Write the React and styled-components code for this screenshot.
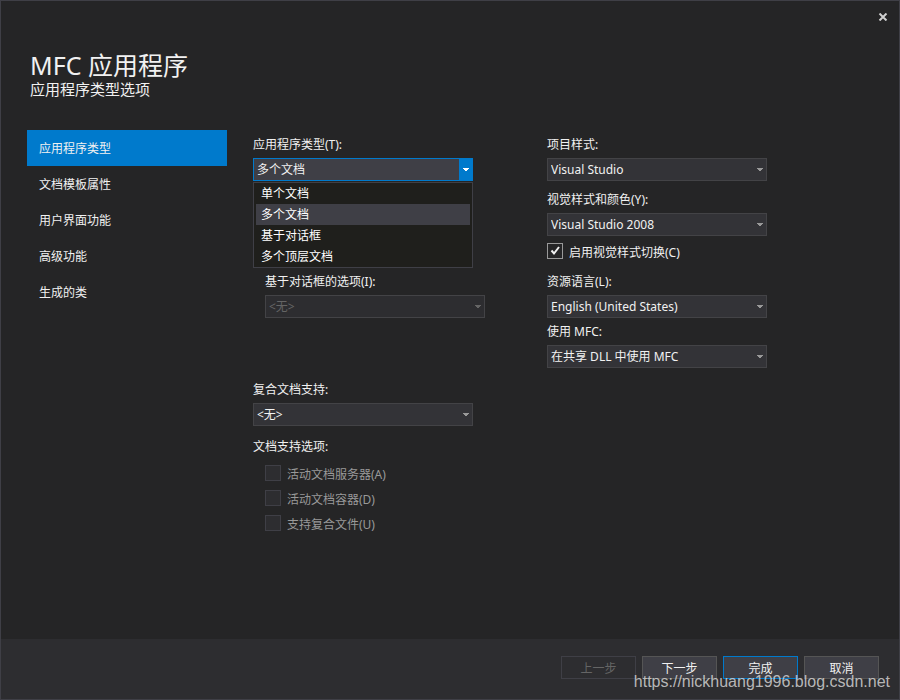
import React, { useState } from 'react'
import styled, { createGlobalStyle } from 'styled-components';

const pages = ['应用程序类型', '文档模板属性', '用户界面功能', '高级功能', '生成的类'];
const appTypes = ['单个文档', '多个文档', '基于对话框', '多个顶层文档'];

function Combo({ id, label, options, disabled, indent, active, children, ...rest }) {
    return (
        <Field $indent={indent}>
            <Label htmlFor={id}>{label}</Label>
            <ComboBox>
                <Select id={id} disabled={disabled} $active={active} {...rest}>
                    {options.map((option) => (
                        <option key={option}>{option}</option>
                    ))}
                </Select>
                <Arrow $active={active} $disabled={disabled}>
                    <svg width="6" height="3" viewBox="0 0 6 3">
                        <path d="M0 0h6v1h-1v1h-1v1h-2v-1h-1v-1h-1z" fill="currentColor" />
                    </svg>
                </Arrow>
                {children}
            </ComboBox>
        </Field>
    )
}

function Check({ id, label, ...rest }) {
    return (
        <CheckRow>
            <Box>
                <CheckInput type="checkbox" id={id} {...rest} />
                <Tick viewBox="0 0 16 16">
                    <path d="M4.5 7.5L7 10.5L12 4" fill="none" stroke="#f1f1f1" strokeWidth="2" />
                </Tick>
            </Box>
            <CheckLabel htmlFor={id}>{label}</CheckLabel>
        </CheckRow>
    )
}

function App() {
    const [page, setPage] = useState(0);
    const [type, setType] = useState('多个文档');

    return (
        <Window>
            <GlobalStyle />
            <TitleBar>
                <Close aria-label="关闭">
                    <svg width="10" height="8" viewBox="0 0 10 8">
                        <path d="M1.5 0.5L8.5 7.5M8.5 0.5L1.5 7.5" stroke="#d0d0d0" strokeWidth="2" />
                    </svg>
                </Close>
            </TitleBar>
            <Header>
                <Title>MFC 应用程序</Title>
                <Subtitle>应用程序类型选项</Subtitle>
            </Header>
            <Body>
                <Nav>
                    {pages.map((name, i) => (
                        <NavItem key={name} $active={i === page} onClick={() => setPage(i)}>{name}</NavItem>
                    ))}
                </Nav>
                <Columns>
                    <Column>
                        <Combo
                            id="type"
                            label="应用程序类型(T):"
                            options={appTypes}
                            value={type}
                            onChange={(e) => setType(e.target.value)}
                            active
                        >
                            <List role="listbox">
                                {appTypes.map((name) => (
                                    <ListItem
                                        key={name}
                                        role="option"
                                        aria-selected={name === type}
                                        $active={name === type}
                                        onClick={() => setType(name)}
                                    >
                                        {name}
                                    </ListItem>
                                ))}
                            </List>
                        </Combo>
                        <DialogGroup>
                            <Combo id="dialog" label="基于对话框的选项(I):" options={['<无>']} disabled indent />
                        </DialogGroup>
                        <CompoundGroup>
                            <Combo id="compound" label="复合文档支持:" options={['<无>']} />
                        </CompoundGroup>
                        <Options>
                            <Legend>文档支持选项:</Legend>
                            <CheckList>
                                <Check id="server" label="活动文档服务器(A)" disabled />
                                <Check id="container" label="活动文档容器(D)" disabled />
                                <Check id="files" label="支持复合文件(U)" disabled />
                            </CheckList>
                        </Options>
                    </Column>
                    <Column>
                        <StyleGroup>
                            <Combo id="project" label="项目样式:" options={['Visual Studio']} />
                            <Combo id="visual" label="视觉样式和颜色(Y):" options={['Visual Studio 2008']} />
                        </StyleGroup>
                        <SwitchGroup>
                            <Check id="switching" label="启用视觉样式切换(C)" defaultChecked />
                        </SwitchGroup>
                        <LanguageGroup>
                            <Combo id="language" label="资源语言(L):" options={['English (United States)']} />
                            <Combo id="mfc" label="使用 MFC:" options={['在共享 DLL 中使用 MFC']} />
                        </LanguageGroup>
                    </Column>
                </Columns>
            </Body>
            <Footer>
                <Button disabled>上一步</Button>
                <Button>下一步</Button>
                <Button $primary>完成</Button>
                <Button>取消</Button>
            </Footer>
            <Watermark>https://nickhuang1996.blog.csdn.net</Watermark>
        </Window>
    )
};

export default App;

const GlobalStyle = createGlobalStyle`
    * {
        box-sizing: border-box;
    }

    body {
        margin: 0;
        background: #252526;
    }

    body, button, select, input {
        font-family: "Noto Sans", "Noto Sans CJK SC", sans-serif;
        font-size: 12px;
    }
`

const Window = styled.div`
    position: relative;
    min-height: 100vh;
    display: flex;
    flex-direction: column;
    color: #f1f1f1;
    background: #252526;
    border: 1px solid #3f3f46;
`

const TitleBar = styled.div`
    display: flex;
    justify-content: flex-end;
    height: 32px;
`

const Close = styled.button`
    display: flex;
    align-items: center;
    justify-content: center;
    width: 32px;
    height: 32px;
    padding: 0;
    border: 0;
    background: none;
`

const Header = styled.header`
    padding: 17px 29px 0;
`

const Title = styled.h1`
    margin: 0;
    font-size: 25px;
    font-weight: 400;
    line-height: 30px;
`

const Subtitle = styled.p`
    margin: 0;
    font-size: 15px;
    line-height: 18px;
`

const Body = styled.main`
    flex: 1;
    display: flex;
    align-items: flex-start;
    gap: 26px;
    padding: 32px 26px 24px;
`

const Nav = styled.nav`
    display: flex;
    flex-direction: column;
    flex: 0 0 200px;
`

const NavItem = styled.button`
    height: 36px;
    padding: 0 12px;
    border: 0;
    text-align: left;
    color: #f1f1f1;
    background: ${(props) => (props.$active ? '#007acc' : 'transparent')};
`

const Columns = styled.div`
    display: flex;
    gap: 62px;
    padding-top: 6px;
`

const Column = styled.div`
    width: 232px;
`

const Field = styled.div`
    width: 220px;
    margin-left: ${(props) => (props.$indent ? '12px' : '0')};
`

const Label = styled.label`
    display: block;
    height: 18px;
    margin-bottom: 4px;
    line-height: 18px;
`

const ComboBox = styled.div`
    position: relative;
    display: grid;
    grid-template-columns: 1fr 14px;
    height: 23px;
`

const Select = styled.select`
    grid-area: 1 / 1 / 2 / 3;
    appearance: none;
    height: 23px;
    padding: 0 16px 0 3px;
    border: 1px solid ${(props) => (props.$active ? '#007acc' : '#434346')};
    border-radius: 0;
    outline: none;
    color: #f1f1f1;
    background: ${(props) => (props.$active ? '#3f3f46' : '#333337')};

    &:disabled {
        color: #656565;
        border-color: #434346;
        background: #2d2d30;
        opacity: 1;
    }
`

const Arrow = styled.span`
    grid-area: 1 / 2 / 2 / 3;
    z-index: 1;
    display: flex;
    align-items: center;
    justify-content: center;
    pointer-events: none;
    color: ${(props) => (props.$active ? '#ffffff' : props.$disabled ? '#656565' : '#999999')};
    background: ${(props) => (props.$active ? '#007acc' : 'transparent')};
`

const List = styled.ul`
    position: absolute;
    top: 24px;
    left: 0;
    right: 0;
    z-index: 2;
    margin: 0;
    padding: 0 2px;
    list-style: none;
    border: 1px solid #3f3f46;
    background: #1f1f1c;
`

const ListItem = styled.li`
    height: 21px;
    padding: 0 5px;
    line-height: 21px;
    color: #ffffff;
    background: ${(props) => (props.$active ? '#3f3f46' : 'transparent')};
`

const DialogGroup = styled.div`
    margin-top: 92px;
`

const CompoundGroup = styled.div`
    margin-top: 63px;
`

const Options = styled.fieldset`
    margin: 12px 0 0;
    padding: 0;
    border: 0;
`

const Legend = styled.legend`
    padding: 0;
    line-height: 18px;
`

const CheckList = styled.div`
    display: flex;
    flex-direction: column;
    gap: 7px;
    padding: 9px 0 0 12px;
`

const CheckRow = styled.div`
    display: flex;
    align-items: flex-start;
    gap: 6px;
    height: 18px;
`

const Box = styled.span`
    position: relative;
    display: flex;
    width: 16px;
    height: 16px;
`

const CheckInput = styled.input`
    appearance: none;
    width: 16px;
    height: 16px;
    margin: 0;
    border: 1px solid #999999;
    background: #252526;

    &:disabled {
        border-color: #3f3f46;
        background: #2d2d30;
    }

    &:not(:checked) + svg {
        display: none;
    }
`

const Tick = styled.svg`
    position: absolute;
    inset: 0;
    pointer-events: none;
`

const CheckLabel = styled.label`
    padding-top: 1px;
    line-height: 18px;

    ${Box}:has(input:disabled) + & {
        color: #999999;
    }
`

const StyleGroup = styled.div`
    display: flex;
    flex-direction: column;
    gap: 10px;
`

const SwitchGroup = styled.div`
    margin-top: 7px;
`

const LanguageGroup = styled.div`
    display: flex;
    flex-direction: column;
    gap: 5px;
    margin-top: 12px;
`

const Footer = styled.footer`
    display: flex;
    justify-content: flex-end;
    gap: 6px;
    padding: 17px 20px 20px;
    background: #2d2d30;
`

const Button = styled.button`
    width: 75px;
    height: 23px;
    padding: 0;
    border: 1px solid ${(props) => (props.$primary ? '#007acc' : '#555555')};
    color: #f1f1f1;
    background: #3f3f46;

    &:disabled {
        color: #656565;
        border-color: #3f3f46;
        background: #2d2d30;
    }
`

const Watermark = styled.div`
    position: absolute;
    right: 9px;
    bottom: 7px;
    font-family: "Liberation Sans", Arial, sans-serif;
    font-size: 16px;
    line-height: 20px;
    color: rgba(220, 220, 220, 0.8);
    pointer-events: none;
`
